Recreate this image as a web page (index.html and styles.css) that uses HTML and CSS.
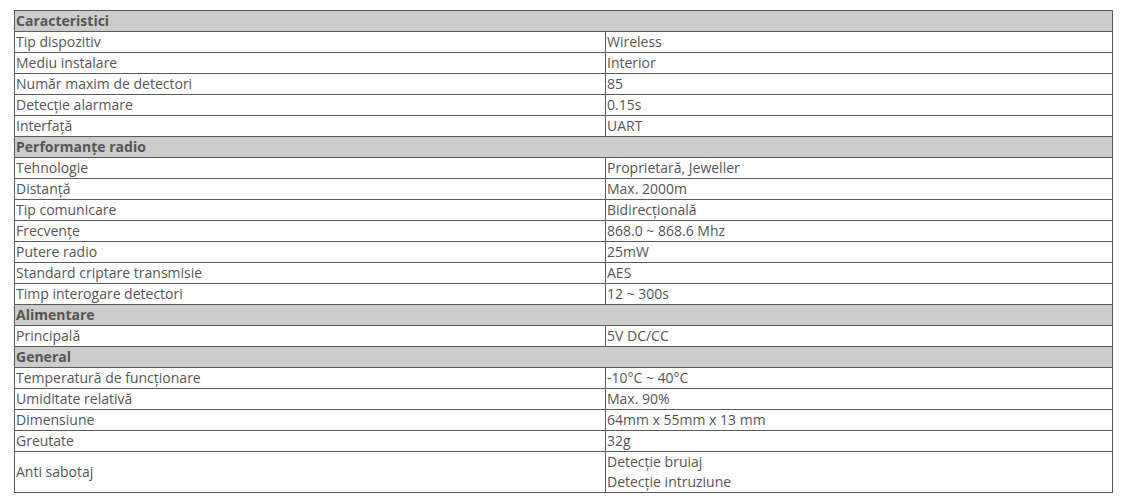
FILE: index.html
```html
<!DOCTYPE html>
<html lang="ro">
<head>
<meta charset="utf-8">
<link rel="stylesheet" href="styles.css">
</head>
<body>
<div class="wrap">
<table class="specs">
<colgroup><col class="c1"><col class="c2"></colgroup>
<tbody>
<tr class="head"><td colspan="2">Caracteristici</td></tr>
<tr><td>Tip dispozitiv</td><td>Wireless</td></tr>
<tr><td>Mediu instalare</td><td>Interior</td></tr>
<tr><td>Număr maxim de detectori</td><td>85</td></tr>
<tr><td>Detecție alarmare</td><td>0.15s</td></tr>
<tr><td>Interfață</td><td>UART</td></tr>
<tr class="head"><td colspan="2">Performanțe radio</td></tr>
<tr><td>Tehnologie</td><td>Proprietară, Jeweller</td></tr>
<tr><td>Distanță</td><td>Max. 2000m</td></tr>
<tr><td>Tip comunicare</td><td>Bidirecțională</td></tr>
<tr><td>Frecvențe</td><td>868.0 ~ 868.6 Mhz</td></tr>
<tr><td>Putere radio</td><td>25mW</td></tr>
<tr><td>Standard criptare transmisie</td><td>AES</td></tr>
<tr><td>Timp interogare detectori</td><td>12 ~ 300s</td></tr>
<tr class="head"><td colspan="2">Alimentare</td></tr>
<tr><td>Principală</td><td>5V DC/CC</td></tr>
<tr class="head"><td colspan="2">General</td></tr>
<tr><td>Temperatură de funcționare</td><td>-10°C ~ 40°C</td></tr>
<tr><td>Umiditate relativă</td><td>Max. 90%</td></tr>
<tr><td>Dimensiune</td><td>64mm x 55mm x 13 mm</td></tr>
<tr><td>Greutate</td><td>32g</td></tr>
<tr><td>Anti sabotaj</td><td>Detecție bruiaj<br>Detecție intruziune</td></tr>
</tbody>
</table>
</div>
</body>
</html>
```
FILE: styles.css
```css
html, body {
  margin: 0;
  padding: 0;
  background: #ffffff;
}
.wrap {
  padding: 10px 0 0 14px;
}
.specs {
  border-collapse: collapse;
  width: 1098px;
  table-layout: fixed;
  font-family: "Open Sans", "Liberation Sans", sans-serif;
  font-size: 14px;
  line-height: 20px;
  color: #555555;
}
.c1 { width: 591px; }
.c2 { width: 507px; }
.specs td {
  border: 1px solid #5a5a5a;
  padding: 0 0 0 1px;
  vertical-align: middle;
  text-align: left;
}
.specs tr.head td {
  background: #cccccc;
  font-weight: bold;
}
```
